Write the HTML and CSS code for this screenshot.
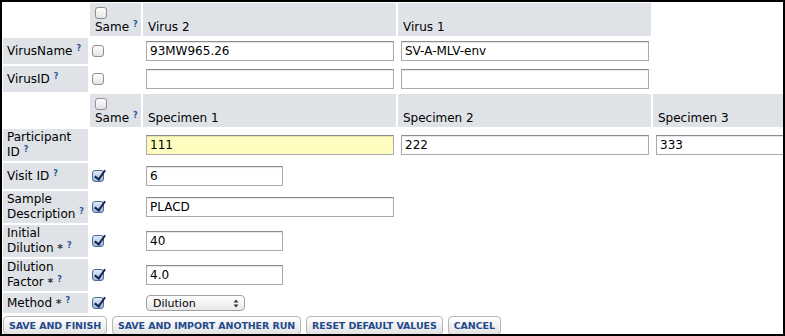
FILE: index.html
```html
<!DOCTYPE html>
<html lang="en">
	<head>
		<meta charset="UTF-8" />
		<meta name="viewport" content="width=device-width, initial-scale=1.0" />
		<title>Run Properties</title>
		<link rel="stylesheet" href="styles.css">
	</head>
	<body>
		<div class="frame">
			<table class="grid">
				<colgroup>
					<col class="c-label" />
					<col class="c-same" />
					<col class="c-val" />
					<col class="c-val" />
					<col class="c-val" />
				</colgroup>
				<tr>
					<td></td>
					<th class="head same"><input type="checkbox" class="cb" /><span class="block">Same<sup class="help">?</sup></span></th>
					<th class="head">Virus 2</th>
					<th class="head">Virus 1</th>
				</tr>
				<tr>
					<th class="label">VirusName<sup class="help">?</sup></th>
					<td class="pick"><input type="checkbox" class="cb" /></td>
					<td class="val"><input type="text" class="txt" value="93MW965.26" /></td>
					<td class="val"><input type="text" class="txt" value="SV-A-MLV-env" /></td>
				</tr>
				<tr>
					<th class="label">VirusID<sup class="help">?</sup></th>
					<td class="pick"><input type="checkbox" class="cb" /></td>
					<td class="val"><input type="text" class="txt" /></td>
					<td class="val"><input type="text" class="txt" /></td>
				</tr>
				<tr>
					<td></td>
					<th class="head same"><input type="checkbox" class="cb" /><span class="block">Same<sup class="help">?</sup></span></th>
					<th class="head">Specimen 1</th>
					<th class="head">Specimen 2</th>
					<th class="head">Specimen 3</th>
				</tr>
				<tr>
					<th class="label">Participant ID<sup class="help">?</sup></th>
					<td class="pick"></td>
					<td class="val"><input type="text" class="txt hl" value="111" /></td>
					<td class="val"><input type="text" class="txt" value="222" /></td>
					<td class="val"><input type="text" class="txt" value="333" /></td>
				</tr>
				<tr>
					<th class="label">Visit ID<sup class="help">?</sup></th>
					<td class="pick"><input type="checkbox" class="cb" checked /></td>
					<td class="val"><input type="text" class="txt short" value="6" /></td>
				</tr>
				<tr>
					<th class="label">Sample Description<sup class="help">?</sup></th>
					<td class="pick"><input type="checkbox" class="cb" checked /></td>
					<td class="val"><input type="text" class="txt" value="PLACD" /></td>
				</tr>
				<tr>
					<th class="label">Initial Dilution <span class="req">*</span><sup class="help">?</sup></th>
					<td class="pick"><input type="checkbox" class="cb" checked /></td>
					<td class="val"><input type="text" class="txt short" value="40" /></td>
				</tr>
				<tr>
					<th class="label">Dilution Factor <span class="req">*</span><sup class="help">?</sup></th>
					<td class="pick"><input type="checkbox" class="cb" checked /></td>
					<td class="val"><input type="text" class="txt short" value="4.0" /></td>
				</tr>
				<tr class="slim">
					<th class="label">Method <span class="req">*</span><sup class="help">?</sup></th>
					<td class="pick"><input type="checkbox" class="cb" checked /></td>
					<td class="val">
						<span class="selwrap">
							<select class="sel"><option>Dilution</option></select>
							<svg class="arrows" width="6" height="9" viewBox="0 0 6 9"><path d="M0.5 3.5 L3 0.5 L5.5 3.5 Z M0.5 5.5 L3 8.5 L5.5 5.5 Z" fill="#333" /></svg>
						</span>
					</td>
				</tr>
			</table>
			<div class="actions">
				<button class="btn">Save and Finish</button>
				<button class="btn">Save and Import Another Run</button>
				<button class="btn">Reset Default Values</button>
				<button class="btn">Cancel</button>
			</div>
		</div>
	</body>
</html>
```

FILE: styles.css
```css
* {
	box-sizing: border-box;
}
body {
	margin: 0;
	font-family: "DejaVu Sans", Verdana, sans-serif;
	font-size: 12px;
	color: #000;
}
.frame {
	width: 785px;
	height: 336px;
	border: 2px solid #000;
	overflow: hidden;
	background: #fff;
}
.grid {
	table-layout: fixed;
	width: 907px;
	border-spacing: 2px;
	margin: -1px 0 0 -1px;
}
.c-label {
	width: 85px;
}
.c-same {
	width: 51px;
}
.c-val {
	width: 253px;
}
.grid th,
.grid td {
	padding: 0;
	font-weight: normal;
	text-align: left;
	line-height: 15px;
}
.grid .head {
	background: #dfe3e8;
	vertical-align: bottom;
	padding: 2px 5px 1px;
	height: 31px;
}
.grid .same {
	padding-left: 5px;
}
.block {
	display: block;
}
.grid .label {
	background: #dfe3e8;
	vertical-align: middle;
	padding: 1px 4px;
}
.grid .pick {
	vertical-align: middle;
	padding: 0 2px;
}
.grid .val {
	vertical-align: middle;
	padding: 3px 3px;
}
.slim .val {
	padding: 2px 3px;
}
.help {
	font-size: 8px;
	font-weight: bold;
	color: #2a5797;
	vertical-align: 4px;
	line-height: 0;
	margin-left: 4px;
}
.req {
	font-weight: bold;
	color: #333;
	font-size: 11px;
}
.cb {
	appearance: none;
	-webkit-appearance: none;
	display: inline-block;
	width: 12px;
	height: 12px;
	margin: 0;
	border: 1px solid #8f8f8f;
	border-radius: 3px;
	background: linear-gradient(#ffffff, #e4e4e4);
	vertical-align: middle;
	position: relative;
}
.cb:checked {
	border-color: #4d6a94;
	background: linear-gradient(#e2ecf9, #9db6dc);
}
.cb:checked::after {
	content: "";
	position: absolute;
	left: 4px;
	top: -3px;
	width: 4px;
	height: 10px;
	border: solid #15264c;
	border-width: 0 2px 2px 0;
	transform: rotate(35deg);
}
.txt {
	width: 248px;
	height: 20px;
	border: 1px solid #aaa;
	border-top-color: #8c8c8c;
	box-shadow: inset 0 1px 1px rgba(0, 0, 0, 0.1);
	padding: 1px 3px;
	font-family: "DejaVu Sans", Verdana, sans-serif;
	font-size: 12px;
	color: #000;
	background: #fff;
	display: block;
}
.txt.short {
	width: 137px;
}
.txt.hl {
	background: #fefdbf;
}
.selwrap {
	position: relative;
	display: inline-block;
	vertical-align: middle;
}
.sel {
	appearance: none;
	-webkit-appearance: none;
	width: 99px;
	height: 16px;
	border: 1px solid #a0a0a0;
	border-radius: 4px;
	background: linear-gradient(#ffffff, #e8e8e8);
	font-family: "DejaVu Sans", Verdana, sans-serif;
	font-size: 11px;
	padding: 0 0 0 6px;
	color: #000;
	display: block;
}
.arrows {
	position: absolute;
	right: 6px;
	top: 4px;
	pointer-events: none;
}
.actions {
	display: flex;
	gap: 5px;
	padding: 1px 0 0 1px;
}
.btn {
	height: 19px;
	padding: 0 5px;
	font-family: "DejaVu Sans", Verdana, sans-serif;
	font-size: 9.5px;
	font-weight: bold;
	letter-spacing: -0.1px;
	text-transform: uppercase;
	color: #1f4a8c;
	background: linear-gradient(#ffffff, #e3e3e3);
	border: 1px solid #b7b7b7;
	border-radius: 4px;
}
```
